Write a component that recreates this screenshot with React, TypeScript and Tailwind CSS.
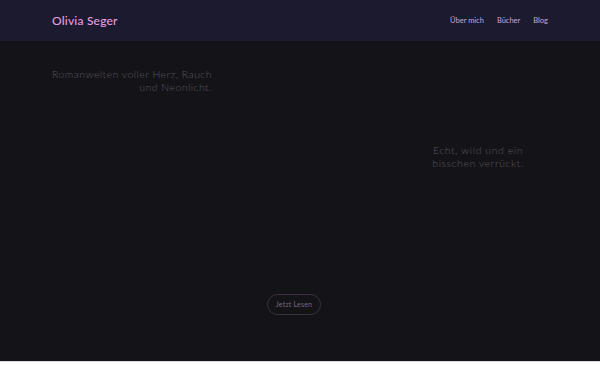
export default function App() {
  return (
    <div className="bg-white" style={{ fontFamily: 'Lato, "Open Sans", sans-serif' }}>
      <div className="flex h-[362px] flex-col bg-[#141318] border-b border-[#d4d6dc]">
        <header className="flex h-[41px] shrink-0 items-center justify-between bg-[#1c1a2f] px-[52px]">
          <span className="text-[12px] font-medium tracking-[0.2px] text-[#e49ee0]">Olivia Seger</span>
          <nav className="flex gap-[13px] text-[7.5px] text-[#c9a6d6]">
            <a>Über mich</a>
            <a>Bücher</a>
            <a>Blog</a>
          </nav>
        </header>

        <main className="flex flex-1 flex-col px-[50px]">
          <div className="flex">
            <p className="mt-[27px] w-[162px] whitespace-nowrap text-right text-[10.5px] font-light leading-[13px] tracking-[0.45px] text-[#57535c]">
              Romanwelten voller Herz, Rauch
              <br />
              und Neonlicht.
            </p>
            <p className="ml-auto mr-[17px] mt-[103px] w-[110px] text-center text-[10.5px] font-light leading-[13px] tracking-[0.55px] text-[#57535c]">
              Echt, wild und ein bisschen verrückt.
            </p>
          </div>

          <div className="mt-auto mb-[46px] flex justify-center pr-[12px]">
            <button className="h-[21px] rounded-full border border-[#3b3140] px-[8px] text-[7px] tracking-[0.2px] text-[#766b7c]">
              Jetzt Lesen
            </button>
          </div>
        </main>
      </div>
    </div>
  )
}
